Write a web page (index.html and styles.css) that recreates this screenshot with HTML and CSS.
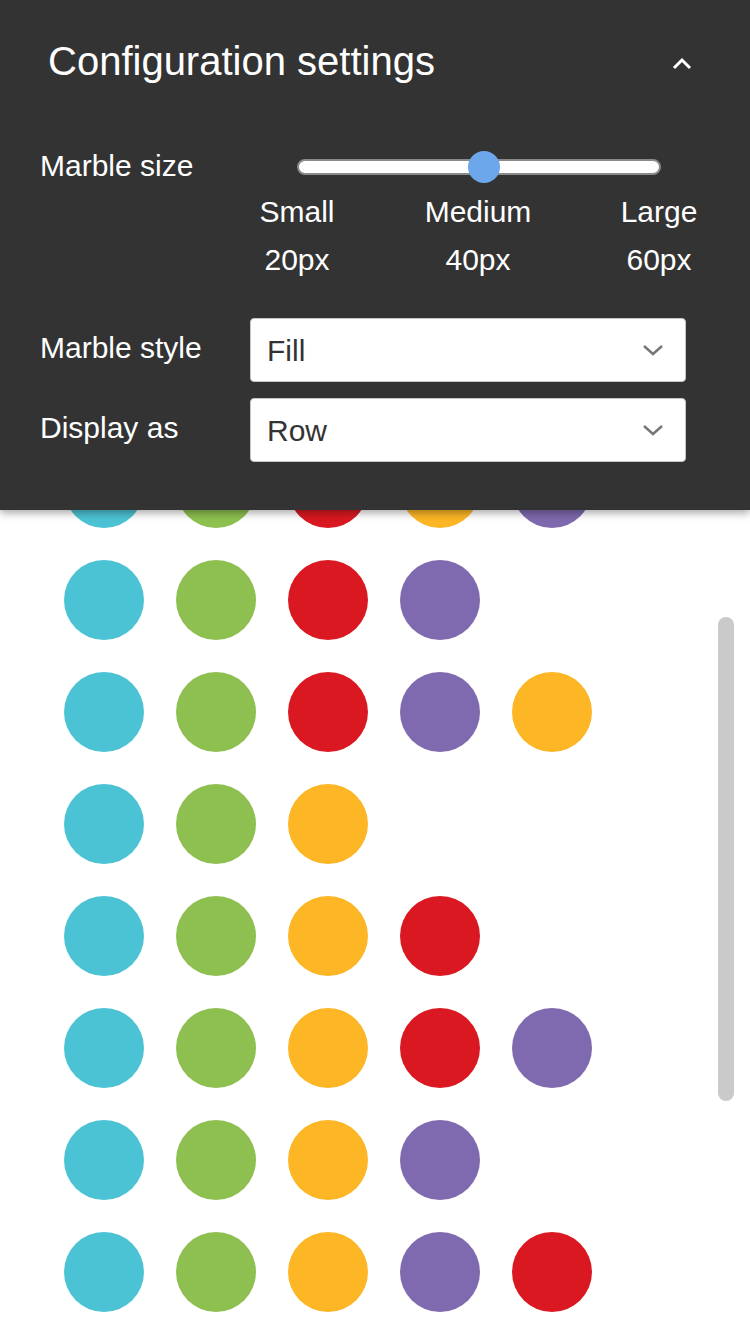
FILE: index.html
```html
<!DOCTYPE html>
<html lang="en">
<head>
<meta charset="utf-8">
<title>Marbles</title>
<link rel="stylesheet" href="styles.css">
</head>
<body>
<div class="panel">
  <div class="title-row">
    <h1 class="title">Configuration settings</h1>
    <svg class="collapse" width="20" height="13" viewBox="0 0 20 13"><polyline points="2,11 10,3 18,11" fill="none" stroke="#fff" stroke-width="3"/></svg>
  </div>
  <div class="size-row">
    <div class="label size-label">Marble size</div>
    <div class="size-control">
      <div class="slider">
        <div class="track"><span class="thumb"></span></div>
      </div>
      <div class="ticks"><span>Small</span><span>Medium</span><span>Large</span></div>
      <div class="ticks"><span>20px</span><span>40px</span><span>60px</span></div>
    </div>
  </div>
  <div class="select-row first">
    <div class="label">Marble style</div>
    <div class="select"><span>Fill</span><svg width="22" height="13" viewBox="0 0 22 13"><polyline points="2,2 11,10 20,2" fill="none" stroke="#777" stroke-width="2.5"/></svg></div>
  </div>
  <div class="select-row">
    <div class="label">Display as</div>
    <div class="select"><span>Row</span><svg width="22" height="13" viewBox="0 0 22 13"><polyline points="2,2 11,10 20,2" fill="none" stroke="#777" stroke-width="2.5"/></svg></div>
  </div>
</div>

<div class="marbles">
  <div class="row"><i class="m cyan"></i><i class="m green"></i><i class="m red"></i><i class="m yellow"></i><i class="m purple"></i></div>
  <div class="row"><i class="m cyan"></i><i class="m green"></i><i class="m red"></i><i class="m purple"></i></div>
  <div class="row"><i class="m cyan"></i><i class="m green"></i><i class="m red"></i><i class="m purple"></i><i class="m yellow"></i></div>
  <div class="row"><i class="m cyan"></i><i class="m green"></i><i class="m yellow"></i></div>
  <div class="row"><i class="m cyan"></i><i class="m green"></i><i class="m yellow"></i><i class="m red"></i></div>
  <div class="row"><i class="m cyan"></i><i class="m green"></i><i class="m yellow"></i><i class="m red"></i><i class="m purple"></i></div>
  <div class="row"><i class="m cyan"></i><i class="m green"></i><i class="m yellow"></i><i class="m purple"></i></div>
  <div class="row"><i class="m cyan"></i><i class="m green"></i><i class="m yellow"></i><i class="m purple"></i><i class="m red"></i></div>
</div>

<div class="scrollbar"></div>
</body>
</html>
```
FILE: styles.css
```css
* { box-sizing: border-box; }
html, body { margin: 0; padding: 0; background: #fff; }
body {
  width: 750px;
  height: 1334px;
  overflow: hidden;
  font-family: "Liberation Sans", Arial, sans-serif;
  position: relative;
}

.panel {
  position: absolute;
  top: 0;
  left: 0;
  width: 750px;
  height: 510px;
  background: #333333;
  color: #fff;
  padding: 0 30px 0 40px;
  box-shadow: 0 3px 8px rgba(0, 0, 0, 0.35);
  z-index: 2;
}

.title-row {
  height: 122px;
  display: flex;
  align-items: center;
  justify-content: space-between;
  padding: 0 28px 0 8px;
}
.title {
  margin: 0;
  font-weight: normal;
  font-size: 40px;
  line-height: 1;
  color: #fff;
}
.collapse { display: block; margin-top: 4px; }

.label {
  font-size: 30px;
  line-height: 42px;
  color: #fff;
}

.size-row {
  display: flex;
  margin-top: 24px;
}
.size-label { width: 202px; flex: none; margin-top: -1px; }
.size-control { width: 474px; }

.slider {
  height: 42px;
  display: flex;
  align-items: center;
  padding: 0 55px;
}
.track {
  flex: 1;
  height: 16px;
  background: #fff;
  border: 2px solid #8a8a8a;
  border-radius: 8px;
  position: relative;
}
.thumb {
  position: absolute;
  left: calc(50% - 11px);
  top: 50%;
  width: 32px;
  height: 32px;
  margin-top: -16px;
  border-radius: 50%;
  background: #6ca7eb;
}

.ticks {
  display: flex;
  justify-content: space-between;
  font-size: 30px;
  line-height: 48px;
  padding-right: 2px;
}
.ticks span {
  width: 110px;
  text-align: center;
}

.select-row {
  display: flex;
  align-items: center;
  margin-top: 16px;
}
.select-row.first { margin-top: 34px; }
.select-row .label { width: 210px; flex: none; margin-top: -4px; }

.select {
  width: 436px;
  height: 64px;
  background: #fff;
  border: 1px solid #c4c4c4;
  border-radius: 4px;
  display: flex;
  align-items: center;
  justify-content: space-between;
  padding: 2px 21px 0 16px;
  color: #333;
  font-size: 30px;
}
.select svg { display: block; margin-top: -2px; }

.marbles {
  padding: 448px 0 0 64px;
}
.row {
  display: flex;
  gap: 32px;
  margin-bottom: 32px;
}
.m {
  display: block;
  width: 80px;
  height: 80px;
  border-radius: 50%;
}
.cyan { background: #4cc3d4; }
.green { background: #8dc050; }
.red { background: #da1821; }
.yellow { background: #fdb726; }
.purple { background: #7f6aaf; }

.scrollbar {
  position: absolute;
  left: 718px;
  top: 617px;
  width: 16px;
  height: 484px;
  border-radius: 8px;
  background: #cacaca;
}
```
